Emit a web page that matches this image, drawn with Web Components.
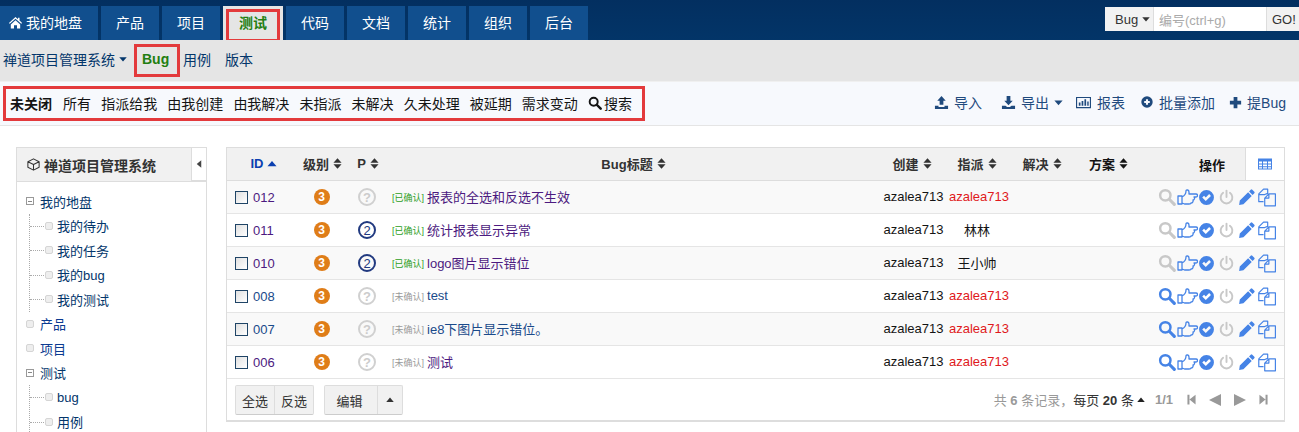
<!DOCTYPE html>
<html lang="zh">
<head>
<meta charset="utf-8">
<title>Bug</title>
<style>
  html, body { margin: 0; height: 432px; overflow: hidden; background: #fff; }
  body { font: 13px "Liberation Sans", "Noto Sans CJK SC", sans-serif; color: #141414; }
</style>
</head>
<body>
<zt-header></zt-header>
<zt-subnav></zt-subnav>
<zt-toolbar></zt-toolbar>
<zt-main></zt-main>

<script>
const ICONS = {
  home: '<path d="M8 2 1 8.4l.9 1L8 3.9l6.1 5.5.9-1-2.700-2.500V3h-1.700v1.400zM3 10l5-4.500 5 4.500v4.500H9.600v-3.500H6.400v3.500H3z"/>',
  caret: '<path d="M2 5h12L8 12z"/>',
  caretup: '<path d="M2 11h12L8 4z"/>',
  sort: '<path d="M3 7 8 1.500 13 7zM3 9h10l-5 5.500z"/>',
  search: '<circle cx="6.500" cy="6.500" r="4.600" fill="none" stroke="currentColor" stroke-width="2.200"/><path d="M10 10l4.500 4.500" stroke="currentColor" stroke-width="2.800" stroke-linecap="round"/>',
  upload: '<path d="M8 1l4.500 5H10v4.500H6V6H3.500zM1 11.500h3.800v1.300h6.400v-1.300H15V15H1z"/>',
  download: '<path d="M6 1h4v5h2.500L8 11 3.500 6H6zM1 11.500h3.800l1.700 1.300h3l1.700-1.300H15V15H1z"/>',
  chart: '<path fill-rule="evenodd" d="M0 2h16v12H0zM1.200 3.200v9.600h13.600V3.200z"/><path d="M3 8h1.800v3.500H3zM6 6.500h1.800v5H6zM9 4.500h1.800v7H9zM12 7h1.500v4.500H12z"/>',
  pluscircle: '<path fill-rule="evenodd" d="M8 1.500a6.500 6.500 0 1 0 0 13 6.500 6.500 0 0 0 0-13zM6.800 4.800h2.400v2h2v2.400h-2v2H6.800v-2h-2V6.800h2z"/>',
  plus: '<path d="M6 2h4v4h4v4h-4v4H6v-4H2V6h4z"/>',
  thumb: '<path fill="none" stroke="currentColor" stroke-width="1.300" stroke-linejoin="round" d="M1 7h4v8H1zM5 8c2-1 4-3 4-6 0-1.500 3-1.500 3 1v2h7c2 0 2 3 0 3h-2c1 1 .5 3-1 3 .5 1.500-.5 3-2 3 0 1-1 1-2 1H7.500L5 14"/>',
  check: '<path fill-rule="evenodd" d="M8 1a7 7 0 1 0 0 14A7 7 0 0 0 8 1zM4 8l1.700-1.700L7.300 8l3.200-3.200L12.200 6.500 7.300 11.400z"/>',
  power: '<path fill="none" stroke="currentColor" stroke-width="1.800" stroke-linecap="round" d="M8 1.500v6M4.800 3.600a5.500 5.500 0 1 0 6.400 0"/>',
  pencil: '<path d="M11.300 1.500a1 1 0 0 1 1.400 0l1.800 1.800a1 1 0 0 1 0 1.400L13 6.200 9.800 3zM9 3.800 12.200 7l-7.400 7.400L1 15l.6-3.800z"/>',
  copy: '<path fill="none" stroke="currentColor" stroke-width="1" stroke-linejoin="round" d="M5.500 1H9v3.500L6.500 5.500H1.500V5zM5.500 1 1.500 5v6.500h4M10 5h5.500v10h-9V8.500zM10 5v3.500H6.500"/>',
  table: '<path fill-rule="evenodd" d="M1 2.500h14v11H1zM2 5.500v2h3v-2zm4 0v2h4v-2zm5 0v2h3v-2zM2 8.500v1.800h3V8.500zm4 0v1.800h4V8.500zm5 0v1.800h3V8.500zM2 11.200v1.300h3v-1.300zm4 0v1.300h4v-1.300zm5 0v1.300h3v-1.300z"/>',
  cube: '<path fill="none" stroke="currentColor" stroke-width="1.100" stroke-linejoin="round" d="M8 2l6 3v6l-6 3-6-3V5zM2 5l6 3 6-3M8 8v6"/>',
  first: '<path d="M3 2h2.500v12H3zM13 2v12L5.500 8z"/>',
  prev: '<path d="M14 2v12L2 8z"/>',
  next: '<path d="M2 2v12l12-6z"/>',
  last: '<path d="M13 2h-2.500v12H13zM3 2v12l7.500-6z"/>',
  left: '<path d="M11 3v10L5 8z"/>'
}
const ICON_WIDTHS = { thumb: 21 }

class ZtIcon extends HTMLElement {
  connectedCallback() {
    const size = Number(this.getAttribute('size') || 14)
    const name = this.getAttribute('name')
    const vbw = ICON_WIDTHS[name] || 16
    this.attachShadow({ mode: 'open' }).innerHTML = `
      <style>
        :host { display: inline-flex; flex: none; vertical-align: middle; }
        svg { display: block; width: ${size * vbw / 16}px; height: ${size}px; fill: currentColor; }
      </style>
      <svg viewBox="0 0 ${vbw} 16">${ICONS[name]}</svg>`
  }
}
customElements.define('zt-icon', ZtIcon)

class ZtHeader extends HTMLElement {
  constructor() {
    super()
    const tabs = ['产品', '项目', '测试', '代码', '文档', '统计', '组织', '后台']
    this.attachShadow({ mode: 'open' }).innerHTML = `
      <style>
        :host { display: flex; height: 40px; box-sizing: border-box; padding-top: 6px; background: linear-gradient(#032f60, #033568); justify-content: space-between; position: relative; }
        nav { display: flex; gap: 3px; }
        a { display: flex; align-items: center; justify-content: center; width: 58px; height: 34px; box-sizing: border-box; padding-bottom: 2px; background: #114f8e; color: #fff; font-size: 14px; gap: 3px; }
        a.home { width: 98px; justify-content: flex-start; padding-left: 8px; }
        a.active { background: #e5e5e5; color: #227e10; font-weight: bold; width: 60px; }
        .mark { position: absolute; left: 226px; top: 9px; width: 54px; height: 33px; box-sizing: border-box; border: 3px solid #e33a3c; }
        form { display: flex; height: 24px; margin: 1px 0 0; }
        .type { width: 49px; box-sizing: border-box; padding-left: 10px; background: #f2f2f2; color: #333; display: flex; align-items: center; gap: 3px; border-right: 1px solid #ddd; }
        .no { width: 112px; box-sizing: border-box; padding-left: 5px; background: #fff; color: #aaa; display: flex; align-items: center; }
        .go { width: 33px; box-sizing: border-box; padding-left: 5px; background: #f2f2f2; color: #333; display: flex; align-items: center; border-left: 1px solid #ddd; }
      </style>
      <nav>
        <a class="home"><zt-icon name="home" size="15"></zt-icon>我的地盘</a>
        ${tabs.map(t => `<a class="${t === '测试' ? 'active' : ''}">${t}</a>`).join('')}
      </nav>
      <div class="mark"></div>
      <form>
        <div class="type">Bug<zt-icon name="caret" size="10"></zt-icon></div>
        <div class="no">编号(ctrl+g)</div>
        <div class="go">GO!</div>
      </form>`
  }
}
customElements.define('zt-header', ZtHeader)

class ZtSubnav extends HTMLElement {
  constructor() {
    super()
    this.attachShadow({ mode: 'open' }).innerHTML = `
      <style>
        :host { display: flex; align-items: center; height: 41px; background: #e5e5e5; color: #03366b; font-size: 14px; padding: 0 0 3px 3px; box-sizing: border-box; position: relative; }
        .root { display: inline-flex; align-items: center; gap: 3px; width: 131px; }
        .bug { color: #227e10; font-weight: bold; padding-left: 8px; width: 41px; }
        .case { width: 42px; }
        .mark { position: absolute; left: 134px; top: 4px; width: 46px; height: 33px; box-sizing: border-box; border: 3px solid #e33a3c; }
      </style>
      <span class="root">禅道项目管理系统<zt-icon name="caret" size="10"></zt-icon></span>
      <span class="mark"></span>
      <span class="bug">Bug</span>
      <span class="case">用例</span>
      <span>版本</span>`
  }
}
customElements.define('zt-subnav', ZtSubnav)

class ZtToolbar extends HTMLElement {
  constructor() {
    super()
    const filters = ['所有', '指派给我', '由我创建', '由我解决', '未指派', '未解决', '久未处理', '被延期', '需求变动']
    this.attachShadow({ mode: 'open' }).innerHTML = `
      <style>
        :host { display: flex; justify-content: space-between; align-items: center; height: 45px; box-sizing: border-box; background: #f7f9fd; border-top: 1px solid #f0f0f0; border-bottom: 1px solid #e5e5e5; font-size: 14px; color: #141414; }
        .filters { display: flex; align-items: center; gap: 10.1px; height: 35px; box-sizing: border-box; margin-left: 3px; padding: 0 0 2px 4px; border: 3px solid #e33a3c; width: 642px; }
        .filters b { font-weight: bold; margin-right: 1px; white-space: nowrap; }
        .filters span { display: inline-flex; align-items: center; gap: 2px; white-space: nowrap; }
        .actions { display: flex; align-items: center; color: #1f4a7d; margin-right: 13px; padding-bottom: 3px; }
        .actions span { display: inline-flex; align-items: center; gap: 5px; white-space: nowrap; }
        .caret { margin-left: -1px; }
      </style>
      <div class="filters">
        <b>未关闭</b>
        ${filters.map(f => `<span>${f}</span>`).join('')}
        <span><zt-icon name="search" size="14"></zt-icon>搜索</span>
      </div>
      <div class="actions">
        <span style="width:67px"><zt-icon name="upload" size="15"></zt-icon>导入</span>
        <span style="width:75px"><zt-icon name="download" size="15"></zt-icon>导出<zt-icon class="caret" name="caret" size="11"></zt-icon></span>
        <span style="width:64px;gap:6px"><zt-icon name="chart" size="15"></zt-icon>报表</span>
        <span style="width:88px"><zt-icon name="pluscircle" size="14"></zt-icon>批量添加</span>
        <span style="gap:4px"><zt-icon name="plus" size="15"></zt-icon>提Bug</span>
      </div>`
  }
}
customElements.define('zt-toolbar', ZtToolbar)

class ZtTree extends HTMLElement {
  constructor() {
    super()
    const leaf = (text, cls = '') => `<li class="${cls}"><i class="leaf"></i><a>${text}</a></li>`
    const subs = list => `<ul>${list.map(t => leaf(t, 'sub')).join('')}</ul>`
    this.attachShadow({ mode: 'open' }).innerHTML = `
      <style>
        :host { display: block; width: 191px; flex: none; height: 285px; box-sizing: border-box; border: 1px solid #ddd; border-bottom: 0; background: #fff; font-size: 13px; overflow: hidden; }
        header { display: flex; align-items: center; height: 33px; background: #f1f1f1; border-bottom: 1px solid #ddd; font-size: 14px; font-weight: bold; color: #333; padding-left: 9px; gap: 3px; position: relative; }
        .toggle { position: absolute; right: 0; top: 0; width: 14px; height: 32px; background: #fff; border-left: 1px solid #ddd; border-bottom: 1px solid #ddd; display: flex; align-items: center; justify-content: center; color: #444; }
        ul { list-style: none; margin: 0; padding: 0; }
        .top { padding: 7px 0 0 9px; }
        li { height: 24.5px; display: flex; align-items: center; gap: 6px; position: relative; }
        a { color: #03366b; }
        .blue a { color: #0a3a90; }
        i { display: block; flex: none; box-sizing: border-box; }
        i.leaf { width: 8px; height: 8px; background: #eee; border: 1px solid #d5d5d5; border-radius: 2px; }
        i.open { width: 8px; height: 8px; border: 1px solid #999; position: relative; }
        i.open::after { content: ""; position: absolute; left: 1px; right: 1px; top: 2.5px; height: 1px; background: #888; }
        .group { display: block; height: auto; }
        .group > div { display: flex; align-items: center; gap: 6px; height: 24.5px; }
        .group ul { margin-left: 3px; border-left: 1px dotted #aaa; padding-left: 15px; }
        li.sub { gap: 4px; }
        li.sub::before { content: ""; position: absolute; left: -15px; width: 14px; border-top: 1px dotted #aaa; top: 12px; }
      </style>
      <header><zt-icon name="cube" size="15"></zt-icon>禅道项目管理系统<span class="toggle"><zt-icon name="left" size="12"></zt-icon></span></header>
      <ul class="top">
        <li class="group"><div><i class="open"></i><a>我的地盘</a></div>${subs(['我的待办', '我的任务', '我的bug', '我的测试'])}</li>
        ${leaf('产品', 'blue')}
        ${leaf('项目', 'blue')}
        <li class="group"><div><i class="open"></i><a>测试</a></div>${subs(['bug', '用例'])}</li>
      </ul>`
  }
}
customElements.define('zt-tree', ZtTree)

const COLS = '69px 51px 40px 493px 64px 66px 64px 68px 1fr'

class ZtBugRow extends HTMLElement {
  constructor() {
    super()
    const a = n => this.getAttribute(n) || ''
    const isNew = a('status') === '未确认'
    const pri = a('pri')
    const assigned = a('to')
    const visited = a('visited') === '1'
    const blue = '#4583e6'
    const grey = '#c8c8c8'
    const acts = [['search', isNew ? blue : grey, 18, 0], ['thumb', blue, 16, 1], ['check', blue, 17, 0], ['power', grey, 17, 3], ['pencil', blue, 18, 3], ['copy', blue, 19, 1]]
    this.attachShadow({ mode: 'open' }).innerHTML = `
      <style>
        :host { display: grid; grid-template-columns: ${COLS}; align-items: center; height: 33px; box-sizing: border-box; border-bottom: 1px solid #e5e5e5; font-size: 13px; background: ${a('stripe') ? '#f9f9f9' : '#fff'}; }
        a { color: ${visited ? '#4c1a80' : '#1a4a8a'}; }
        .id { display: flex; align-items: center; gap: 5px; padding-left: 8px; }
        .box { width: 13px; height: 13px; box-sizing: border-box; border: 1px solid #1f4466; background: linear-gradient(135deg, #e0e0e0, #fff); }
        .sev { justify-self: center; width: 16px; height: 16px; border-radius: 50%; background: #df7d18; color: #fff; font-size: 12px; font-weight: bold; display: flex; align-items: center; justify-content: center; }
        .pri { justify-self: center; width: 18px; height: 18px; box-sizing: border-box; border-radius: 50%; border: 2px solid ${pri === '?' ? '#d0d0d0' : '#223a80'}; color: ${pri === '?' ? '#ccc' : '#223a80'}; font-size: 13px; font-weight: ${pri === '?' ? 'bold' : 'normal'}; display: flex; align-items: center; justify-content: center; }
        .title { padding: 0 0 2px 5px; display: flex; align-items: center; gap: 3px; white-space: nowrap; }
        small { font-size: 9px; color: ${isNew ? '#999' : '#2c9e23'}; padding-top: 2px; }
        .c { text-align: center; white-space: nowrap; color: #141414; padding-bottom: 1px; }
        .pad { padding-left: 3px; }
        .red { color: #e0191c; padding-left: 4px; }
        .acts { grid-column: 8 / 10; justify-self: end; display: flex; align-items: center; padding-right: 8px; }
      </style>
      <div class="id"><span class="box"></span><a>${a('bug-id')}</a></div>
      <div class="sev">3</div>
      <div class="pri">${pri}</div>
      <div class="title"><small>[${a('status')}]</small><a>${a('title')}</a></div>
      <div class="c pad">azalea713</div>
      <div class="c ${assigned === 'azalea713' ? 'red' : ''}">${assigned}</div>
      <div></div>
      <div class="acts">
        ${acts.map(([n, c, s, m]) => `<zt-icon name="${n}" size="${s}" style="color:${c};margin-left:${m}px"></zt-icon>`).join('')}
      </div>`
  }
}
customElements.define('zt-bug-row', ZtBugRow)

class ZtBugTable extends HTMLElement {
  constructor() {
    super()
    const th = (label, left = 2) => `<span class="th" style="padding-left:${left}px">${label}<zt-icon name="sort" size="13"></zt-icon></span>`
    this.attachShadow({ mode: 'open' }).innerHTML = `
      <style>
        :host { display: block; width: 1059px; flex: none; box-sizing: border-box; border: 1px solid #ddd; border-bottom-width: 2px; background: #fff; font-size: 13px; }
        .head { display: grid; grid-template-columns: ${COLS}; align-items: center; height: 33px; box-sizing: border-box; background: #f1f1f1; border-bottom: 1px solid #ddd; font-weight: bold; color: #333; }
        .th { display: inline-flex; align-items: center; justify-content: center; gap: 2px; white-space: nowrap; padding-bottom: 1px; }
        .id { color: #0b3fb0; padding-left: 5px; }
        .ops { grid-column: 8 / 10; display: flex; align-items: center; justify-content: flex-end; height: 32px; color: #141414; }
        .grid { width: 38px; height: 32px; background: #fff; border-left: 1px solid #ddd; margin-left: 20px; display: flex; align-items: center; justify-content: center; color: #4583e6; }
        footer { display: flex; justify-content: space-between; align-items: center; height: 41px; box-sizing: border-box; padding: 0 14px 0 8px; }
        .btns { display: flex; gap: 10px; margin-top: 1px; }
        .group { display: flex; height: 30px; box-sizing: border-box; border: 1px solid #ddd; border-bottom-color: #ccc; border-radius: 2px; background: #f1f1f1; color: #333; }
        .group span { display: flex; align-items: center; justify-content: center; box-sizing: border-box; height: 100%; }
        .group span + span { border-left: 1px solid #ddd; }
        .pager { display: flex; align-items: center; color: #999; white-space: nowrap; }
        .pager b { font-weight: bold; }
        .dark { color: #333; }
        .pg { display: flex; align-items: center; gap: 9px; color: #999; margin-left: 12px; }
      </style>
      <div class="head">
        <span class="th id">ID<zt-icon name="caretup" size="12" style="color:#0b3fb0"></zt-icon></span>
        ${th('级别', 4)}
        ${th('P', 4)}
        ${th('Bug标题')}
        ${th('创建')}
        ${th('指派')}
        ${th('解决')}
        <span class="ops">
          <span class="th" style="flex:1;justify-content:flex-start;padding-left:15px">方案<zt-icon name="sort" size="13"></zt-icon></span>
          <span>操作</span>
          <span class="grid"><zt-icon name="table" size="16"></zt-icon></span>
        </span>
      </div>
      <slot></slot>
      <footer>
        <div class="btns">
          <div class="group"><span style="width:38px">全选</span><span style="width:39px">反选</span></div>
          <div class="group"><span style="width:52px;padding-right:3px">编辑</span><span style="width:25px"><zt-icon name="caretup" size="10"></zt-icon></span></div>
        </div>
        <div class="pager">
          <span>共 <b>6</b> 条记录，</span>
          <span class="dark">每页 <b>20</b> 条</span><zt-icon name="caretup" size="10" style="color:#222;margin-left:2px"></zt-icon>
          <b style="margin-left:9px">1/1</b>
          <span class="pg">
            <zt-icon name="first" size="13"></zt-icon>
            <zt-icon name="prev" size="16"></zt-icon>
            <zt-icon name="next" size="16"></zt-icon>
            <zt-icon name="last" size="13"></zt-icon>
          </span>
        </div>
      </footer>`
  }
}
customElements.define('zt-bug-table', ZtBugTable)

class ZtMain extends HTMLElement {
  constructor() {
    super()
    const bugs = [
      ['012', '?', '已确认', '报表的全选和反选不生效', 'azalea713', 1],
      ['011', '2', '已确认', '统计报表显示异常', '林林', 1],
      ['010', '2', '已确认', 'logo图片显示错位', '王小帅', 1],
      ['008', '?', '未确认', 'test', 'azalea713', 0],
      ['007', '?', '未确认', 'ie8下图片显示错位。', 'azalea713', 0],
      ['006', '?', '未确认', '测试', 'azalea713', 1]
    ]
    this.attachShadow({ mode: 'open' }).innerHTML = `
      <style>
        :host { display: flex; gap: 19px; padding: 21px 0 0 16px; align-items: flex-start; }
      </style>
      <zt-tree></zt-tree>
      <zt-bug-table>
        ${bugs.map((b, i) => `<zt-bug-row bug-id="${b[0]}" pri="${b[1]}" status="${b[2]}" title="${b[3]}" to="${b[4]}" visited="${b[5]}" ${i % 2 === 0 ? 'stripe="1"' : ''}></zt-bug-row>`).join('')}
      </zt-bug-table>`
  }
}
customElements.define('zt-main', ZtMain)
</script>
</body>
</html>
